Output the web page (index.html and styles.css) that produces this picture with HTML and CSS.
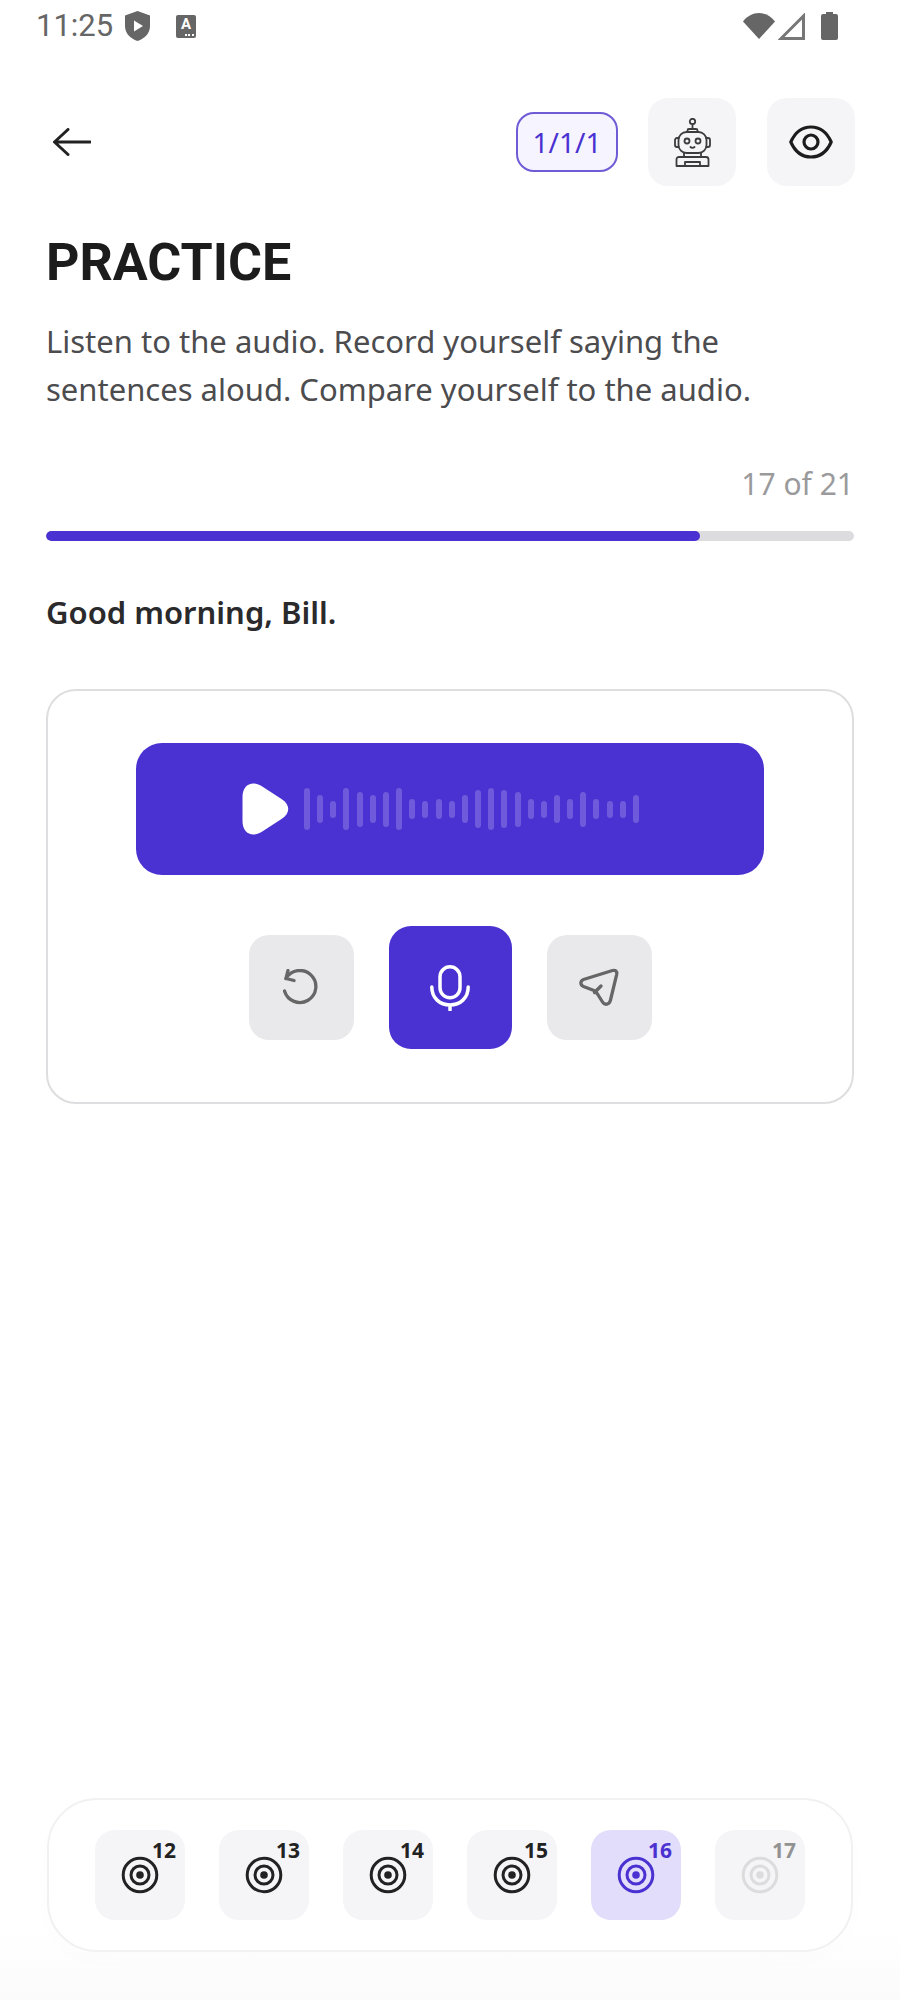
FILE: index.html
```html
<!DOCTYPE html>
<html lang="en">
<head>
<meta charset="utf-8">
<title>Practice</title>
<link rel="stylesheet" href="styles.css">
</head>
<body>
<div class="page">
  <div class="status">
    <span class="time">11:25</span>
    <svg class="shield" viewBox="0 0 25 30"><path d="M12.5 0 25 4.500V15C25 22 20 27.500 12.500 30 5 27.500 0 22 0 15V4.500Z" fill="#666"/><path d="M9 9.500 18 15 9 20.500Z" fill="#fff"/></svg>
    <span class="akey"><span>A</span></span>
    <span class="status-gap"></span>
    <svg class="wifi" viewBox="0 0 32 26"><path d="M0 8.500C4 3 10 0 16 0s12 3 16 8.500L16 26Z" fill="#666"/></svg>
    <svg class="signal" viewBox="0 0 27 27"><path d="M25.500 3V25.500H3Z" fill="none" stroke="#777" stroke-width="3"/></svg>
    <svg class="battery" viewBox="0 0 17 28"><path d="M5 0h7v2h3a2 2 0 0 1 2 2v22a2 2 0 0 1-2 2H2a2 2 0 0 1-2-2V4a2 2 0 0 1 2-2h3Z" fill="#666"/></svg>
  </div>

  <div class="topbar">
    <svg class="back" viewBox="0 0 38 28"><path d="M37 14H2M15 1.500 1.500 14 15 26.500" fill="none" stroke="#222" stroke-width="3" stroke-linecap="round" stroke-linejoin="round"/></svg>
    <div class="actions">
      <span class="badge">1/1/1</span>
      <span class="tool">
        <svg class="robot" viewBox="0 0 37 49" fill="none" stroke="#3c3c3c" stroke-width="1.800" stroke-linecap="round" stroke-linejoin="round"><circle cx="18.500" cy="3.500" r="2.700"/><path d="M18.500 6.200V11M13.500 14v-1.500a1.500 1.500 0 0 1 1.500-1.500h7a1.500 1.500 0 0 1 1.500 1.500V14"/><rect x="4.500" y="14" width="28" height="21" rx="8"/><path d="M4.500 20H3a2 2 0 0 0-2 2v5a2 2 0 0 0 2 2h1.500M32.500 20H34a2 2 0 0 1 2 2v5a2 2 0 0 1-2 2h-1.500"/><circle cx="13" cy="23" r="2.500"/><circle cx="24" cy="23" r="2.500"/><path d="M16.500 29c1 1 3 1 4 0M10 35v4M27 35v4M5 39h27a2.500 2.500 0 0 1 2.500 2.500V48H2.500v-6.500A2.500 2.500 0 0 1 5 39ZM11 48v-4h15v4"/></svg>
      </span>
      <span class="tool">
        <svg class="eye" viewBox="0 0 44 34" fill="none" stroke="#1c1c1c" stroke-width="3.200"><path d="M1.800 17C6 7.500 13 2 22 2s16 5.500 20.200 15C38 26.500 31 32 22 32S6 26.500 1.800 17Z" stroke-linejoin="round"/><circle cx="22" cy="17" r="7"/></svg>
      </span>
    </div>
  </div>

  <main class="content">
    <h1 class="title">PRACTICE</h1>
    <p class="desc">Listen to the audio. Record yourself saying the<br>sentences aloud. Compare yourself to the audio.</p>
    <div class="count">17 of 21</div>
    <div class="progress"><div class="fill"></div></div>
    <p class="sentence">Good morning, Bill.</p>

    <section class="card">
      <div class="player">
        <svg class="play" viewBox="0 0 46 52"><path d="M0 14C0 2 9-3 19 3l20 13c9 6 9 14 0 20L19 49C9 55 0 50 0 38Z" fill="#fff"/></svg>
        <div class="wave">
          <i style="height:42px"></i><i style="height:28px"></i><i style="height:17px"></i><i style="height:42px"></i><i style="height:35px"></i><i style="height:28px"></i><i style="height:35px"></i><i style="height:42px"></i><i style="height:20px"></i><i style="height:17px"></i><i style="height:20px"></i><i style="height:17px"></i><i style="height:28px"></i><i style="height:38px"></i><i style="height:42px"></i><i style="height:38px"></i><i style="height:35px"></i><i style="height:20px"></i><i style="height:17px"></i><i style="height:28px"></i><i style="height:20px"></i><i style="height:35px"></i><i style="height:20px"></i><i style="height:17px"></i><i style="height:17px"></i><i style="height:28px"></i>
        </div>
      </div>
      <div class="controls">
        <span class="ctl">
          <svg class="ctl-icon" viewBox="0 0 36 38" fill="none" stroke="#666" stroke-width="3.300" stroke-linecap="round" stroke-linejoin="round"><path d="M3 9.500A16 16 0 1 1 1.500 22"/><path d="M5 1.500 3 9.500 11 11.500"/></svg>
        </span>
        <span class="mic">
          <svg class="mic-icon" viewBox="0 0 40 46" fill="none" stroke="#fff" stroke-width="3.500" stroke-linecap="round"><rect x="10" y="1.800" width="20" height="31" rx="10"/><path d="M1.800 22c0 11 8 18 18.200 18s18.200-7 18.200-18M20 40v5"/></svg>
        </span>
        <span class="ctl">
          <svg class="ctl-icon send" viewBox="0 0 40 40" fill="none" stroke="#666" stroke-width="3.300" stroke-linecap="round" stroke-linejoin="round"><path d="M33.500 2.500c3-.8 4.800.8 4.200 3.800L31.500 32c-1 5-6 5.500-8 2L18.500 26c-1-1.500-2-2.500-3.500-3.500L4.500 18.500C1 17 1 13 4.500 11.500Z"/><path d="M15.500 24.500 22 18"/></svg>
        </span>
      </div>
    </section>
  </main>

  <footer class="footer">
    <nav class="nav">
      <span class="tile"><svg class="target" viewBox="0 0 38 38"><use href="#t"/></svg><b class="num">12</b></span>
      <span class="tile"><svg class="target" viewBox="0 0 38 38"><use href="#t"/></svg><b class="num">13</b></span>
      <span class="tile"><svg class="target" viewBox="0 0 38 38"><use href="#t"/></svg><b class="num">14</b></span>
      <span class="tile"><svg class="target" viewBox="0 0 38 38"><use href="#t"/></svg><b class="num">15</b></span>
      <span class="tile current"><svg class="target" viewBox="0 0 38 38"><use href="#t"/></svg><b class="num">16</b></span>
      <span class="tile locked"><svg class="target" viewBox="0 0 38 38"><use href="#t"/></svg><b class="num">17</b></span>
    </nav>
  </footer>
</div>
<svg class="defs" aria-hidden="true"><defs><g id="t" fill="none" stroke="currentColor" stroke-width="3"><circle cx="19" cy="19" r="16.800"/><circle cx="19" cy="19" r="9"/><circle cx="19" cy="19" r="3.800" fill="currentColor" stroke="none"/></g></defs></svg>
</body>
</html>
```
FILE: styles.css
```css
* { box-sizing: border-box; }
html, body { margin: 0; background: #fff; }
body { font-family: "Noto Sans", "Open Sans", sans-serif; color: #222; }
.page { width: 900px; height: 2000px; display: flex; flex-direction: column; }
.defs { display: none; }

.status { height: 52px; padding: 0 62px 0 36px; display: flex; align-items: center; flex: none; }
.time { font: 400 31px/52px Roboto, sans-serif; color: #666; width: 76px; white-space: nowrap; }
.shield { width: 25px; height: 30px; margin-left: 13px; }
.akey { position: relative; width: 20px; height: 23px; margin-left: 26px; background: #666; border-radius: 2px; display: flex; justify-content: center; align-items: flex-start; }
.akey span { font: 700 15px/18px Roboto, sans-serif; color: #fff; }
.akey::after { content: ""; position: absolute; right: 2px; bottom: 2px; width: 9px; height: 2px; background: repeating-linear-gradient(90deg, #fff 0 2px, transparent 2px 3.500px); }
.status-gap { flex: 1; }
.wifi { width: 32px; height: 26px; }
.signal { width: 27px; height: 27px; margin-left: 3px; }
.battery { width: 17px; height: 28px; margin-left: 16px; }

.topbar { height: 88px; margin-top: 46px; padding: 0 45px 0 53px; display: flex; align-items: center; justify-content: space-between; flex: none; }
.back { width: 38px; height: 28px; }
.actions { display: flex; align-items: center; }
.badge { width: 102px; height: 60px; margin-right: 30px; border: 2px solid #6f5bd6; border-radius: 18px; background: #f6f4ff; color: #4a31d1; font: 400 28px/56px "Noto Sans", sans-serif; text-align: center; }
.tool { width: 88px; height: 88px; margin-left: 31px; background: #f5f5f8; border-radius: 20px; display: flex; align-items: center; justify-content: center; }
.badge + .tool { margin-left: 0; }
.robot { width: 37px; height: 49px; }
.eye { width: 44px; height: 34px; }

.content { padding: 0 46px; }
.title { margin: 47px 0 0; font: 700 52px/60px Roboto, sans-serif; color: #1c1c1c; }
.desc { margin: 24px 0 0; font-size: 31px; line-height: 48px; color: #4c4c4f; }
.count { margin-top: 47px; font-size: 30px; line-height: 48px; color: #9a9a9c; text-align: right; }
.progress { margin-top: 23px; height: 10px; border-radius: 5px; background: #dcdcde; overflow: hidden; }
.fill { width: 81%; height: 100%; background: #4a31d1; border-radius: 5px; }
.sentence { margin: 48px 0 0; font-size: 31px; line-height: 46px; font-weight: 600; color: #2a2a2c; }

.card { margin-top: 54px; height: 415px; border: 2px solid #dedee0; border-radius: 30px; padding: 52px 88px 0; }
.player { height: 132px; background: #4a31d1; border-radius: 26px; padding-left: 106px; display: flex; align-items: center; }
.play { width: 47px; height: 52px; flex: none; }
.wave { margin-left: 15px; display: flex; align-items: center; gap: 7.160px; }
.wave i { display: block; width: 6px; border-radius: 3px; background: rgba(255, 255, 255, .2); }
.controls { margin-top: 51px; display: flex; align-items: center; justify-content: center; gap: 35px; }
.ctl { width: 105px; height: 105px; background: #e9e9eb; border-radius: 20px; display: flex; align-items: center; justify-content: center; }
.ctl-icon { width: 36px; height: 38px; }
.send { width: 40px; height: 40px; }
.mic { width: 123px; height: 123px; background: #4a31d1; border-radius: 22px; display: flex; align-items: center; justify-content: center; }
.mic-icon { width: 40px; height: 46px; }

.footer { margin-top: auto; padding: 0 47px 48px; background: linear-gradient(#fff 65%, #fbfbfb 100%); }
.nav { height: 154px; border: 2px solid #f1f1f2; border-radius: 50px; padding: 30px 46px; background: #fff; display: flex; justify-content: space-between; box-shadow: 0 8px 30px rgba(0, 0, 0, .012); }
.tile { position: relative; width: 90px; height: 90px; border-radius: 20px; background: #f5f5f8; color: #222; display: flex; align-items: center; justify-content: center; }
.target { width: 38px; height: 38px; }
.num { position: absolute; left: 57px; top: 7px; font: 700 21px/26px "Noto Sans", sans-serif; }
.current { background: #e2ddfa; color: #4a31d1; }
.locked .target { color: #dcdcdc; }
.locked .num { color: #929292; }
```
